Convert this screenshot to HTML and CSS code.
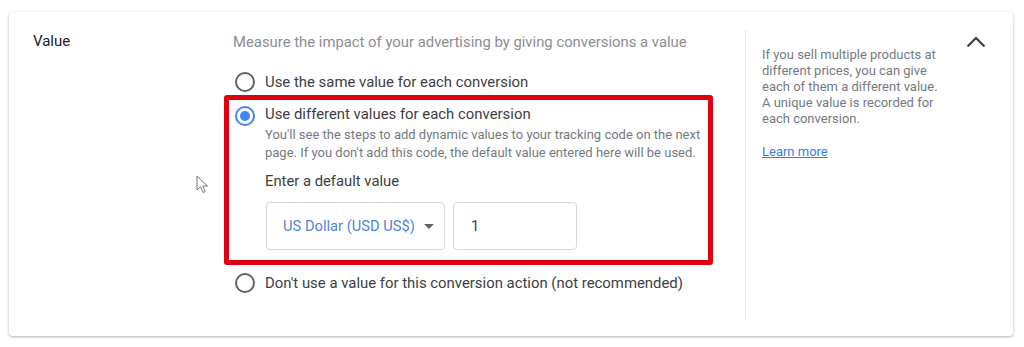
FILE: index.html
```html
<!DOCTYPE html>
<html>
<head>
<meta charset="utf-8">
<link rel="stylesheet" href="styles.css">
</head>
<body>
<div class="card">
  <div class="label-col">Value</div>
  <div class="main-col">
    <div class="desc">Measure the impact of your advertising by giving conversions a value</div>
    <div class="option opt-first">
      <span class="radio"></span>
      <div class="opt-body"><div class="opt-label">Use the same value for each conversion</div></div>
    </div>
    <div class="highlight">
      <div class="option">
        <span class="radio checked"></span>
        <div class="opt-body">
          <div class="opt-label">Use different values for each conversion</div>
          <div class="help">You'll see the steps to add dynamic values to your tracking code on the next page. If you don't add this code, the default value entered here will be used.</div>
          <div class="field-label">Enter a default value</div>
          <div class="fields">
            <div class="select">
              <span class="select-text">US Dollar (USD US$)</span>
              <span class="caret"></span>
            </div>
            <div class="input">1</div>
          </div>
        </div>
      </div>
    </div>
    <div class="option opt-last">
      <span class="radio"></span>
      <div class="opt-body"><div class="opt-label">Don't use a value for this conversion action (not recommended)</div></div>
    </div>
  </div>
  <div class="side-col">
    <p class="side-text">If you sell multiple products at different prices, you can give each of them a different value. A unique value is recorded for each conversion.</p>
    <a class="learn" href="#">Learn more</a>
  </div>
  <div class="toggle">
    <svg width="20" height="12" viewBox="0 0 20 12"><polyline points="1.5,10.5 10,2 18.5,10.5" fill="none" stroke="#3c4043" stroke-width="2.2"/></svg>
  </div>
</div>
<svg class="cursor" width="14" height="20" viewBox="0 0 14 20"><path d="M1 1 L1 15 L4.5 11.8 L7 17.5 L9.2 16.5 L6.8 11 L11.5 11 Z" fill="#fff" stroke="#777" stroke-width="1" stroke-linejoin="round"/></svg>
</body>
</html>
```

FILE: styles.css
```css
html, body {
  margin: 0;
  padding: 0;
  background: #ffffff;
}
body {
  font-family: Roboto, "Noto Sans", Arial, sans-serif;
  position: relative;
  width: 1024px;
  height: 347px;
  overflow: hidden;
}
.card {
  margin: 12px 0 0 9px;
  width: 1004px;
  height: 324px;
  box-sizing: border-box;
  border-radius: 4px;
  background: #fff;
  box-shadow: 0 1px 2px rgba(60,64,67,0.25), 0 1px 3px 1px rgba(60,64,67,0.10);
  display: flex;
}
.label-col {
  width: 224px;
  box-sizing: border-box;
  padding: 19px 0 0 24px;
  font-size: 15px;
  line-height: 20px;
  color: #202124;
}
.main-col {
  width: 512px;
  box-sizing: border-box;
  padding-top: 20px;
}
.desc {
  font-size: 14.85px;
  line-height: 20px;
  color: #8a8e93;
}
.option {
  display: flex;
  align-items: flex-start;
}
.opt-first {
  margin-top: 18px;
  margin-left: 2px;
}
.opt-last {
  margin-top: 6px;
  margin-left: 2px;
}
.radio {
  flex: none;
  width: 20px;
  height: 20px;
  box-sizing: border-box;
  border: 2px solid #5f6368;
  border-radius: 50%;
  margin-top: 2px;
  position: relative;
}
.radio.checked {
  border-color: #4285f4;
}
.radio.checked::after {
  content: "";
  position: absolute;
  left: 3px;
  top: 3px;
  width: 10px;
  height: 10px;
  border-radius: 50%;
  background: #4285f4;
}
.opt-body {
  margin-left: 10px;
}
.opt-label {
  font-size: 14.9px;
  line-height: 24px;
  color: #3c4043;
}
.highlight {
  margin: 1px 0 0 -9px;
  width: 489px;
  box-sizing: border-box;
  border: 5px solid #e1000f;
  border-radius: 3px;
  padding: 4px 0 10px 6px;
}
.highlight .radio {
  margin-top: 2px;
}
.highlight .opt-label {
  line-height: 24px;
  margin-top: -2px;
}
.help {
  font-size: 13px;
  line-height: 18px;
  color: #757a7f;
  width: 442px;
}
.field-label {
  margin-top: 9px;
  font-size: 14.8px;
  line-height: 20px;
  color: #3c4043;
}
.fields {
  margin-top: 11px;
  display: flex;
  gap: 8px;
  margin-left: 1px;
}
.select {
  width: 179px;
  height: 48px;
  box-sizing: border-box;
  border: 1px solid #d5d7da;
  border-radius: 4px;
  display: flex;
  align-items: center;
  padding-left: 16px;
}
.select-text {
  font-size: 14.7px;
  color: #4f83dd;
}
.caret {
  margin-left: 9px;
  width: 0;
  height: 0;
  border-left: 5px solid transparent;
  border-right: 5px solid transparent;
  border-top: 5px solid #5f6368;
}
.input {
  width: 124px;
  height: 48px;
  box-sizing: border-box;
  border: 1px solid #d5d7da;
  border-radius: 4px;
  display: flex;
  align-items: center;
  padding-left: 17px;
  font-size: 14.7px;
  color: #3c4043;
}
.side-col {
  margin: 18px 0 16px 0;
  width: 200px;
  box-sizing: border-box;
  border-left: 1px solid #e4e5e7;
  padding: 17px 0 0 16px;
}
.side-text {
  margin: 0;
  font-size: 13px;
  line-height: 16px;
  color: #757a7f;
  width: 182px;
}
.learn {
  display: inline-block;
  margin-top: 17px;
  font-size: 13px;
  line-height: 16px;
  color: #3d7be0;
  text-decoration: underline;
}
.toggle {
  margin-left: auto;
  padding: 24px 27px 0 0;
}
.toggle svg {
  display: block;
}
.cursor {
  position: absolute;
  left: 196px;
  top: 175px;
}
```
